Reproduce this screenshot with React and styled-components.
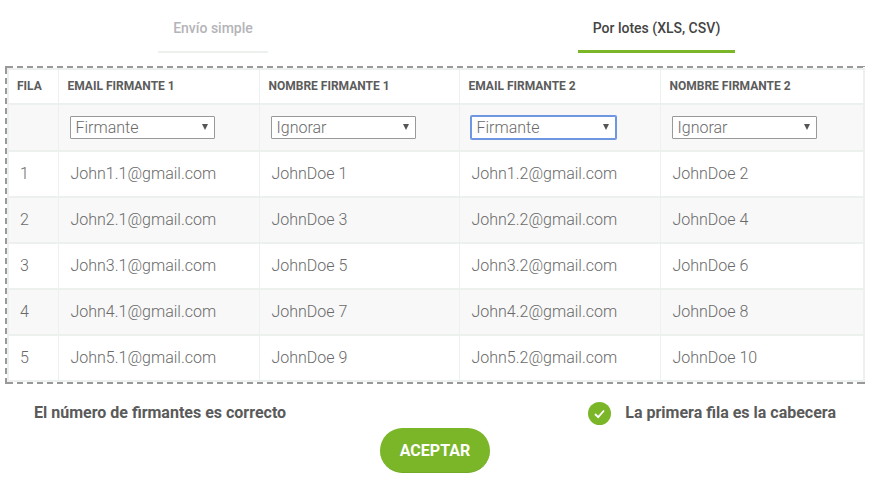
import styled, { createGlobalStyle } from "styled-components";

const GlobalStyle = createGlobalStyle`
  html, body {
    margin: 0;
    padding: 0;
    background: #fff;
  }
  body {
    font-family: Roboto, "Liberation Sans", sans-serif;
  }
`;

const Page = styled.div`
  width: 874px;
  height: 486px;
  overflow: hidden;
  box-sizing: border-box;
  padding: 0 9px 0 5px;
`;

const Tabs = styled.div`
  display: flex;
  height: 66px;
  align-items: flex-start;
`;

const Tab = styled.div`
  box-sizing: border-box;
  height: 53px;
  margin-left: ${(p) => p.$left}px;
  width: ${(p) => p.$width}px;
  padding-top: 20px;
  text-align: center;
  font-size: 14px;
  font-weight: 500;
  line-height: 16px;
  color: ${(p) => (p.$active ? "#444" : "#b4b4b8")};
  border-bottom: ${(p) => (p.$active ? "3px solid #7ab628" : "2px solid #edf1ed")};
`;

// dashes drawn by hand: the browser's own dashed border has a shorter period
const dashFromStart = "transparent 0 2px, #999 2px 8px, transparent 8px 10px";
const dashFromEnd = "#999 0 3px, transparent 3px 7px, #999 7px 10px";

const DashedBox = styled.div`
  box-sizing: border-box;
  width: 860px;
  height: 318px;
  padding: 2px;
  background:
    linear-gradient(#999, #999) top left / 8px 2px no-repeat,
    linear-gradient(#999, #999) top left / 2px 8px no-repeat,
    repeating-linear-gradient(90deg, ${dashFromStart}) top / 100% 2px no-repeat,
    repeating-linear-gradient(90deg, ${dashFromStart}) bottom / 100% 2px no-repeat,
    repeating-linear-gradient(180deg, ${dashFromStart}) left / 2px 100% no-repeat,
    repeating-linear-gradient(0deg, ${dashFromEnd}) right / 2px 100% no-repeat;
`;

const Table = styled.table`
  width: 856px;
  border-collapse: collapse;
  table-layout: fixed;
  border-top: 2px solid #edf1ed;
  border-left: 2px solid #edf1ed;
  color: #666;
`;

const Row = styled.tr`
  height: ${(p) => p.$height}px;
  background: ${(p) => (p.$shaded ? "#f8f8f8" : "#fff")};
  border-bottom: 2px solid #edf1ed;
`;

const HeadCell = styled.th`
  padding: 0 0 2px 9px;
  text-align: left;
  font-size: 12px;
  font-weight: 700;
  color: #5c5c5c;
  border-right: 1px solid #edf1ed;
  &:first-child {
    padding-left: 8px;
  }
  &:last-child {
    border-right: 2px solid #edf1ed;
  }
`;

const Cell = styled.td`
  padding: 0 0 2px 12px;
  font-size: 16px;
  font-weight: 300;
  color: #6a6a6a;
  border-right: 1px solid #edf1ed;
  &:first-child {
    padding-left: 11px;
  }
  &:last-child {
    border-right: 2px solid #edf1ed;
  }
`;

const SelectCell = styled(Cell)`
  padding: 0 0 0 11px;
`;

const FakeSelect = styled.div`
  box-sizing: border-box;
  width: 145px;
  height: 23px;
  display: flex;
  align-items: center;
  justify-content: space-between;
  padding: 0 5px;
  background: #fff;
  border: 1px solid ${(p) => (p.$focused ? "#6f96e0" : "#999")};
  box-shadow: ${(p) => (p.$focused ? "0 0 0 1px #6f96e0" : "none")};
  border-radius: 1px;
  font-size: 16px;
  font-weight: 300;
  color: #6a6a6a;
`;

const Arrow = styled.span`
  width: 0;
  height: 0;
  margin: 0 1px 2px 0;
  border-left: 3px solid transparent;
  border-right: 3px solid transparent;
  border-top: 6px solid #555;
`;

const Footer = styled.div`
  display: flex;
  align-items: center;
  justify-content: space-between;
  height: 24px;
  margin-top: 17px;
  padding: 0 29px 0 29px;
  font-size: 16px;
  font-weight: 700;
  color: #5a5a5a;
`;

const FooterText = styled.span`
  margin-bottom: 2px;
`;

const CheckLabel = styled.div`
  display: flex;
  align-items: center;
  gap: 14px;
`;

const CheckDot = styled.svg`
  display: block;
  width: 23px;
  height: 23px;
`;

const Actions = styled.div`
  display: flex;
  justify-content: center;
  margin-top: 3px;
`;

const AcceptButton = styled.button`
  width: 110px;
  height: 45px;
  border: 0;
  border-bottom: 1px solid #72aa26;
  border-radius: 23px;
  background: #7ab628;
  color: #fff;
  font-family: inherit;
  font-size: 16px;
  font-weight: 700;
`;

const columns = [
  { head: "FILA", width: 50 },
  { head: "EMAIL FIRMANTE 1", width: 201, pick: "Firmante" },
  { head: "NOMBRE FIRMANTE 1", width: 200, pick: "Ignorar" },
  { head: "EMAIL FIRMANTE 2", width: 201, pick: "Firmante", focused: true },
  { head: "NOMBRE FIRMANTE 2", width: 204, pick: "Ignorar" },
];

const rows = [
  ["1", "John1.1@gmail.com", "JohnDoe 1", "John1.2@gmail.com", "JohnDoe 2"],
  ["2", "John2.1@gmail.com", "JohnDoe 3", "John2.2@gmail.com", "JohnDoe 4"],
  ["3", "John3.1@gmail.com", "JohnDoe 5", "John3.2@gmail.com", "JohnDoe 6"],
  ["4", "John4.1@gmail.com", "JohnDoe 7", "John4.2@gmail.com", "JohnDoe 8"],
  ["5", "John5.1@gmail.com", "JohnDoe 9", "John5.2@gmail.com", "JohnDoe 10"],
];

export default function App() {
  return (
    <>
      <GlobalStyle />
      <Page>
        <Tabs>
          <Tab $left={153} $width={110}>Envío simple</Tab>
          <Tab $active $left={310} $width={157}>Por lotes (XLS, CSV)</Tab>
        </Tabs>
        <DashedBox>
          <Table>
            <colgroup>
              {columns.map((c) => (
                <col key={c.head} width={c.width} />
              ))}
            </colgroup>
            <thead>
              <Row $height={35}>
                {columns.map((c) => (
                  <HeadCell key={c.head}>{c.head}</HeadCell>
                ))}
              </Row>
            </thead>
            <tbody>
              <Row $height={47} $shaded>
                {columns.map((c) => (
                  <SelectCell key={c.head}>
                    {c.pick && (
                      <FakeSelect $focused={c.focused}>
                        {c.pick}
                        <Arrow />
                      </FakeSelect>
                    )}
                  </SelectCell>
                ))}
              </Row>
              {rows.map((row, i) => (
                <Row key={row[0]} $height={46} $shaded={i % 2 === 1}>
                  {row.map((text) => (
                    <Cell key={text}>{text}</Cell>
                  ))}
                </Row>
              ))}
            </tbody>
          </Table>
        </DashedBox>
        <Footer>
          <FooterText>El número de firmantes es correcto</FooterText>
          <CheckLabel>
            <CheckDot viewBox="0 0 23 23">
              <circle cx="11.5" cy="11.5" r="11.5" fill="#7ab628" />
              <path d="M7 12l3.2 3.2 5.8-6.7" fill="none" stroke="#fff" strokeWidth="1.8" />
            </CheckDot>
            <FooterText>La primera fila es la cabecera</FooterText>
          </CheckLabel>
        </Footer>
        <Actions>
          <AcceptButton>ACEPTAR</AcceptButton>
        </Actions>
      </Page>
    </>
  );
}
